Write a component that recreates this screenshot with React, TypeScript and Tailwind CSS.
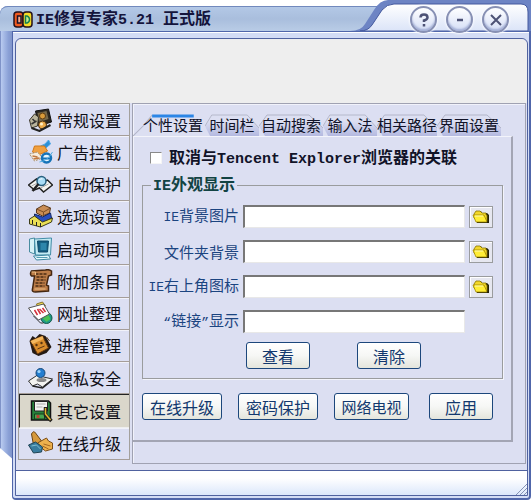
import { useState, type ReactNode } from "react";

const LATIN = "font-['Liberation_Mono',monospace]";

const icons: Record<string, ReactNode> = {
  general: (
    <>
      <path d="M7 3 L20 1 L23 14 L10 18 Z" fill="#2b2720" stroke="#111" />
      <path d="M9 5 L18 3 L20 11 L11 14 Z" fill="#77694a" />
      <path d="M1 12 L6 6 L10 9 L9 18 L3 20 Z" fill="#b9b49c" stroke="#3a352a" />
      <path d="M4 11 L7 14 M3 16 L8 13" stroke="#333" strokeWidth="1.5" />
      <circle cx="14" cy="8" r="3" fill="#d99b3a" stroke="#5c3a10" />
      <circle cx="14" cy="17" r="4" fill="#e9a94a" stroke="#4d3211" />
      <circle cx="13" cy="16" r="1.5" fill="#fff0c8" />
      <path d="M3 20 L11 23 L22 17" stroke="#222" strokeWidth="2" fill="none" />
    </>
  ),
  ads: (
    <>
      <path d="M12 6 Q17 5 20 0 L22 4 L15 10 Z" fill="#2c91d8" stroke="#4ba6e6" />
      <path d="M6 6 L16 6 L19 11 L10 15 L4 12 Z" fill="#f0a040" stroke="#d07818" />
      <path d="M1 14 L9 12 L14 18 L6 21 Z" fill="#f6ecdc" stroke="#a99375" strokeDasharray="2 1" />
      <path d="M4 16 L9 17 M5 19 L11 18" stroke="#c07840" strokeWidth="1.5" />
      <circle cx="18" cy="18" r="4.5" fill="#e8f6ff" stroke="#1673b8" strokeWidth="2.5" />
      <path d="M14 18.5 H22" stroke="#1673b8" strokeWidth="2" />
      <path d="M11 22 Q19 21 24 12" stroke="#55aee2" fill="none" />
    </>
  ),
  protect: (
    <>
      <path d="M0 13 L8 7 L13 10 L19 8 L24 13 L15 20 L11 16 L6 18 Z" fill="#f5f5f2" stroke="#222" strokeWidth="1.5" />
      <path d="M12 16 L20 12 M9 11 L3 14" stroke="#aaa" />
      <circle cx="13" cy="9" r="4.5" fill="#a9dcf5" stroke="#28607f" strokeWidth="1.5" />
      <path d="M11 8 Q12 6 14 7" stroke="#fff" fill="none" />
      <path d="M10 12 L4 19" stroke="#222" strokeWidth="2.5" />
    </>
  ),
  options: (
    <>
      <path d="M8 5 L15 1 L22 4 L21 9 L14 12 L8 9 Z" fill="#c98d55" stroke="#59391d" />
      <path d="M8 5 L15 8 L22 4 M15 8 V12" stroke="#7b4e27" fill="none" />
      <path d="M6 10 L14 13 L22 9 L23 14 L14 19 L6 15 Z" fill="#284fc0" stroke="#142764" />
      <path d="M1 15 L6 12 L14 18 L24 14 L23 18 L12 23 L1 20 Z" fill="#eadf55" stroke="#3d3c18" />
      <path d="M4 16 V20 M8 18 V22 M12 19 V23" stroke="#222" />
    </>
  ),
  startup: (
    <>
      <path d="M1 2 L6 1 L6 17 L1 15 Z" fill="#d8f2f8" stroke="#498ca0" />
      <path d="M6 2 L23 1 L22 18 L7 18 Z" fill="#c3ebf4" stroke="#438da7" />
      <path d="M9 4 L20 4 L19 15 L10 15 Z" fill="#166184" stroke="#0e4868" />
      <path d="M12 6 H18 V13 H12 Z" fill="#2e86ab" />
      <path d="M5 19 L20 18 L22 22 L8 23 Z" fill="#e6fbff" stroke="#3d86a0" />
      <path d="M8 20.5 H19" stroke="#559eb2" />
    </>
  ),
  extra: (
    <>
      <path d="M3 2 Q1 5 3 7 L6 7 L4 20 Q3 23 7 23 L20 22 L20 17 L18 16 L20 7 L23 6 V2 Q20 0 17 1 Z" fill="#bb7c47" stroke="#442711" strokeWidth="1.5" />
      <path d="M7 5 H19 M8 8 H17 M8 11 H17 M7 14 H16 M7 17 H16" stroke="#4c2c15" strokeDasharray="3 1" strokeWidth="1.5" />
      <path d="M3 3 H7 V6 M6 20 H17" stroke="#efc087" fill="none" />
    </>
  ),
  sites: (
    <>
      <circle cx="18" cy="17" r="5.5" fill="#1d9a86" stroke="#145648" />
      <path d="M14 17 L20 14 L22 18 L18 21 Z" fill="#4abf55" />
      <path d="M8 3 L14 1 L17 5 L10 8 Z" fill="#f2db53" stroke="#897329" />
      <path d="M0 7 L15 3 L21 13 L10 19 L5 14 Z" fill="#fff" stroke="#555" />
      <path d="M6 9 L9 14 M9 8 L12 13 M11 8 L15 12 M14 7 L17 11" stroke="#d12f3a" strokeWidth="1.5" />
      <path d="M5 15 L12 22 L15 22" stroke="#333" fill="none" />
    </>
  ),
  process: (
    <>
      <path d="M1 8 L4 3 L7 5 L11 1 L17 3 L23 14 L18 20 L10 23 L4 20 Z" fill="#241a14" />
      <path d="M2 8 L14 3 L20 15 L9 21 Z" fill="#d98c2c" stroke="#69390f" />
      <path d="M2 8 L14 3 L15 6 L4 11 Z" fill="#f4b85e" />
      <circle cx="8" cy="12" r="1.2" fill="#58340f" />
      <circle cx="13" cy="10" r="1.2" fill="#58340f" />
      <path d="M9 16 L16 13 M18 4 L21 8" stroke="#5a3312" />
    </>
  ),
  privacy: (
    <>
      <path d="M0 15 L9 9 L15 11 L24 13 L14 21 L9 18 L4 20 Z" fill="#f4f4f1" stroke="#333" />
      <path d="M4 20 L14 22 L24 14" stroke="#222" strokeWidth="1.5" fill="none" />
      <ellipse cx="13" cy="14" rx="5" ry="2" fill="#888" />
      <circle cx="12" cy="7" r="4.5" fill="#247ed0" stroke="#174777" />
      <circle cx="10.5" cy="5.5" r="1.6" fill="#9cd4fa" />
    </>
  ),
  other: (
    <>
      <path d="M3 2 H20 L22 4 V21 H3 Z" fill="#26823b" stroke="#111" strokeWidth="1.5" />
      <path d="M6 2.5 H19 V12 H6 Z" fill="#f3f3f1" stroke="#222" />
      <path d="M8 5 H17 M8 8 H14" stroke="#aaa" />
      <path d="M6 15 H16 V20 H6 Z" fill="#48a64f" stroke="#173d1c" />
      <rect x="8" y="16" width="3" height="3" fill="#bc3e32" />
      <path d="M17 8 V16 L23 22" stroke="#222" strokeWidth="3.5" fill="none" />
      <path d="M17 9 V15 L22 21" stroke="#e3b62e" strokeWidth="1.5" fill="none" />
    </>
  ),
  update: (
    <>
      <path d="M3 3 Q5 -1 7 2 L13 10 L11 17 L5 14 Z" fill="#d6993c" stroke="#684312" />
      <path d="M9 12 L18 7 L20 10 L24 12 L24 18 L17 20 L13 17 Z" fill="#edb14d" stroke="#7b4e19" />
      <path d="M0 14 L7 11 L14 16 L13 21 L5 22 Z" fill="#397c9e" stroke="#204454" />
      <path d="M3 15 L8 14 L12 18" stroke="#80bed0" fill="none" />
      <path d="M15 13 L22 15 M14 15 L20 18" stroke="#a76820" />
    </>
  ),
};

const navItems: [string, string][] = [
  ["general", "常规设置"],
  ["ads", "广告拦截"],
  ["protect", "自动保护"],
  ["options", "选项设置"],
  ["startup", "启动项目"],
  ["extra", "附加条目"],
  ["sites", "网址整理"],
  ["process", "进程管理"],
  ["privacy", "隐私安全"],
  ["other", "其它设置"],
  ["update", "在线升级"],
];

const tabs: [string, string][] = [
  ["个性设置", "w-[72px] pl-2"],
  ["时间栏", "w-[54px]"],
  ["自动搜索", "w-16"],
  ["输入法", "w-[54px]"],
  ["相关路径", "w-[60px]"],
  ["界面设置", "w-16"],
];

const fields: { id: string; latin?: string; label: string; browse: boolean }[] = [
  { id: "ie-background", latin: "IE", label: "背景图片", browse: true },
  { id: "folder-background", label: "文件夹背景", browse: true },
  { id: "ie-corner", latin: "IE", label: "右上角图标", browse: true },
  { id: "links", label: "链接显示", browse: false },
];

function AppLogo() {
  return (
    <svg viewBox="0 0 20 17" className="h-[17px] w-5 shrink-0" aria-hidden="true">
      <rect x="1" y="1" width="9" height="15" rx="3" fill="#f05a20" stroke="#24121c" strokeWidth="1.5" />
      <rect x="10" y="1" width="9" height="15" rx="3" fill="#f5d928" stroke="#24121c" strokeWidth="1.5" />
      <rect x="4.5" y="5" width="3.5" height="7" fill="#f9a98b" stroke="#1b1328" strokeWidth="1.5" />
      <path d="M12.5 5 H14 Q16.500 6 16.500 8.500 T14 12 H12.500 Z" fill="#c9ed8e" stroke="#138052" strokeWidth="1.5" />
    </svg>
  );
}

function CapButton({ name, children }: { name: string; children: ReactNode }) {
  return (
    <button
      type="button"
      aria-label={name}
      className="flex size-[27px] items-center justify-center rounded-full border-2 border-[#8790b4] bg-linear-to-b from-white to-[#d5def6] shadow-[0_0_2px_1px_#f8faff,inset_0_-2px_2px_#a3afd6]"
    >
      <svg viewBox="0 0 16 16" className="size-4" fill="none" stroke="#4d5275" strokeWidth="2.5" aria-hidden="true">
        {children}
      </svg>
    </button>
  );
}

function FolderIcon() {
  return (
    <svg viewBox="0 0 18 14" className="h-3.5 w-[18px]" aria-hidden="true">
      <path d="M3 4 L5 1 H9 L10 3 H15 L17 5 V13 H5 Z" fill="#222008" />
      <path d="M2 4 L4 1 H8 L10 3 H14 V5 H15 V11 H5 L2 8 Z" fill="#f3d72a" stroke="#877400" strokeWidth="0.8" />
      <path d="M1 5 H12 L15 12 H4 Z" fill="#ffed36" stroke="#9f8600" strokeWidth="0.8" />
      <path d="M3 6 H11" stroke="#fffab0" />
    </svg>
  );
}

function PushButton({ size, children }: { size: string; children: ReactNode }) {
  return (
    <button
      type="button"
      className={`h-[27px] shrink-0 rounded-[3px] border border-[#1c477c] bg-linear-to-b from-white via-[#f6f7f5] to-[#e4e5dc] leading-6 whitespace-nowrap text-[#12386e] ${size}`}
    >
      {children}
    </button>
  );
}

function Tab({ label, width, active, onClick }: { label: string; width: string; active: boolean; onClick: () => void }) {
  return (
    <button
      type="button"
      role="tab"
      aria-selected={active}
      onClick={onClick}
      className={`relative isolate flex h-[22px] shrink-0 items-center justify-center text-[15px] leading-5 whitespace-nowrap text-[#111328] ${width}`}
    >
      <svg viewBox="0 0 64 22" preserveAspectRatio="none" className="absolute inset-0 -z-10 size-full" aria-hidden="true">
        <defs>
          <linearGradient id={`tab-${label}`} x1="0" y1="0" x2="0" y2="1">
            <stop offset="0.3" stopColor="#dcdff2" />
            <stop offset="1" stopColor={active ? "#dcdff2" : "#b4b9e0"} />
          </linearGradient>
        </defs>
        <path
          d={active ? "M0 22 L9 12 L17 1 H53 L64 22" : "M0 12 L8 1 H50 L64 14 V22 H6 Z"}
          fill={`url(#tab-${label})`}
        />
        <path d={active ? "M0 22 L9 12 L17 1" : "M0 12 L8 1 H50 L64 14"} fill="none" stroke="#b2b5c8" />
        {active && <path d="M17 2 H54" stroke="#2c86e6" strokeWidth="3" />}
      </svg>
      {label}
    </button>
  );
}

export default function App() {
  const [page, setPage] = useState("other");
  const [tab, setTab] = useState("个性设置");

  return (
    <div className="relative isolate flex min-h-screen flex-col bg-white font-['Noto_Sans_CJK_SC',sans-serif] text-base">
      <div className="absolute top-1.5 bottom-[38px] left-0 -z-10 w-4 rounded-tl-lg border-l border-[#7f93c8] bg-linear-to-r from-[#b9cbf0] via-[#8aa0d6] to-[#7688bd] [clip-path:polygon(0_0,100%_0,100%_100%,0_calc(100%-14px))]" />

      <header className="flex h-[31px] shrink-0 items-end">
        <h1 className="flex h-[25px] min-w-0 flex-1 items-center rounded-tl-lg border-t border-[#7189bd] bg-linear-to-b from-[#b3c8e6] via-[#a9bedd] to-[#b9cce6] pl-[13px] leading-6 font-bold whitespace-pre text-[#14143c]">
          <AppLogo />
          <span className="ml-[3px]">
            <span className={`text-[15px] ${LATIN}`}>IE</span>修复专家
            <span className={`text-[15px] ${LATIN}`}>5.21 </span>正式版
          </span>
        </h1>
        <div className="relative isolate -ml-8 flex h-[31px] w-[181px] items-center justify-end gap-[9px] pt-2 pr-[22px]">
          <svg viewBox="0 0 181 31" preserveAspectRatio="none" className="absolute inset-0 -z-10 size-full" aria-hidden="true">
            <defs>
              <linearGradient id="cap" x1="0" y1="0" x2="0" y2="1">
                <stop offset="0" stopColor="#ffffff" />
                <stop offset="1" stopColor="#dbe4f8" />
              </linearGradient>
            </defs>
            <path d="M0 31 Q11 31 15 24 L24 10 Q30 0 38 0 H181 V31 Z" fill="#6d84c4" />
            <path d="M10 31 Q18 31 22 25 L32 10 Q37 4 44 4 H171 Q178 4 178 12 V31 Z" fill="url(#cap)" stroke="#44599e" />
          </svg>
          <CapButton name="帮助">
            <path d="M4.500 5.500 Q4.500 2.500 8 2.500 T11.500 5.500 Q11.500 7.500 8 8.500 V10 M8 12 V14.500" />
          </CapButton>
          <CapButton name="最小化">
            <path d="M5 8 H11" />
          </CapButton>
          <CapButton name="关闭">
            <path d="M3 3 L13 13 M13 3 L3 13" strokeWidth="2" />
          </CapButton>
        </div>
      </header>

      <div className="ml-3 flex flex-1 flex-col rounded-b-sm border-t border-r-2 border-b-2 border-l border-[#5066aa] bg-[#d3dcf5] pt-1.5 pr-px pb-0.5 pl-0.5 shadow-[inset_0_1px_#ffffff]">
        <div className="flex flex-1 flex-col rounded-t-md border border-[#50629f] bg-[#dcdff2]">
          <div className="h-16 rounded-t-md bg-[#eeeeee]" />

          <main className="flex flex-1 items-stretch gap-0.5 pr-px pl-0.5">
            <nav className="mb-2.5 flex w-28 shrink-0 flex-col border-x border-t border-[#a3a09c]">
              {navItems.map(([id, label]) => (
                <button
                  key={id}
                  type="button"
                  aria-current={page === id}
                  onClick={() => setPage(id)}
                  className={
                    page === id
                      ? "flex flex-1 items-center gap-1 border-t border-b border-l border-t-[#222222] border-b-[#eeeeee] border-l-[#222222] bg-[#dad7cb] pl-2 leading-6 text-[#101018]"
                      : "flex flex-1 items-center gap-1 border-b border-[#a59d98] pl-[9px] leading-6 text-[#101018] shadow-[inset_0_1px_#f1f2fa]"
                  }
                >
                  <svg viewBox="0 0 24 24" className="h-6 w-[25px] shrink-0" fill="none" aria-hidden="true">
                    {icons[id]}
                  </svg>
                  {label}
                </button>
              ))}
            </nav>

            <section className="mb-1.5 flex min-w-0 flex-1 flex-col border border-[#a0a2b2] pt-2.5 pr-3 pb-[21px] shadow-[inset_1px_1px_#f1f2fb]">
              <div role="tablist" className="flex">
                {tabs.map(([label, width]) => (
                  <Tab key={label} label={label} width={width} active={tab === label} onClick={() => setTab(label)} />
                ))}
              </div>

              <div
                role="tabpanel"
                aria-label={tab}
                className="flex-1 border-t border-r-2 border-b-2 border-t-[#f3f4fb] border-r-[#a3a5b4] border-b-[#a3a5b4] pt-[11px] pr-2 pl-[9px]"
              >
                <label className="flex h-5 items-center gap-[7px] pl-2 leading-5 font-bold whitespace-nowrap text-[#111328]">
                  <input
                    type="checkbox"
                    className="size-3 shrink-0 appearance-none border border-t-[#898989] border-r-[#f5f5f5] border-b-[#f5f5f5] border-l-[#898989] bg-white checked:bg-[#284fc0]"
                  />
                  <span>
                    取消与<span className={`text-[15px] ${LATIN}`}>Tencent Explorer</span>浏览器的关联
                  </span>
                </label>

                <fieldset className="mt-[5px] min-w-0 border border-[#9a9c9e] pr-[9px] pb-[9px] pl-1 shadow-[1px_1px_#f3f4fb]">
                  <legend className="ml-1 px-0.5 leading-5 font-bold text-[#124343]">
                    <span className={`text-[15px] ${LATIN}`}>IE</span>外观显示
                  </legend>
                  <div className="flex flex-col gap-3 pt-2">
                    {fields.map((field) => (
                      <div key={field.id} className="grid h-[23px] grid-cols-[92px_1fr_24px] items-center gap-1">
                        <label htmlFor={field.id} className="text-right text-[15px] leading-5 whitespace-nowrap text-[#1b4480]">
                          {field.latin && <span className={`text-[13px] ${LATIN}`}>{field.latin}</span>}
                          {field.browse ? (
                            field.label
                          ) : (
                            <>
                              <span className={`text-[13px] ${LATIN}`}>“</span>链接<span className={`text-[13px] ${LATIN}`}>”</span>显示
                            </>
                          )}
                        </label>
                        <input
                          id={field.id}
                          type="text"
                          className="h-[23px] w-full min-w-0 border-t-2 border-r border-b border-l-2 border-t-[#777777] border-r-[#e8e8e8] border-b-[#e8e8e8] border-l-[#777777] bg-white px-1 text-[15px]"
                        />
                        {field.browse && (
                          <button
                            type="button"
                            aria-label="浏览"
                            className="flex h-[22px] w-6 items-center justify-center border border-[#9a9c9e] bg-[#e6e7f0] shadow-[inset_1px_1px_#ffffff]"
                          >
                            <FolderIcon />
                          </button>
                        )}
                      </div>
                    ))}
                  </div>
                  <div className="mt-[9px] flex gap-[47px] pl-[99px]">
                    <PushButton size="w-16">查看</PushButton>
                    <PushButton size="w-16">清除</PushButton>
                  </div>
                </fieldset>

                <div className="mt-3.5 flex gap-4">
                  <PushButton size="w-20">在线升级</PushButton>
                  <PushButton size="w-20">密码保护</PushButton>
                  <PushButton size="w-[75px] text-[15px]">网络电视</PushButton>
                  <PushButton size="ml-1 w-16">应用</PushButton>
                </div>
              </div>
            </section>
          </main>

          <footer className="flex h-[25px] shrink-0 items-end justify-end border-t border-[#50629f] bg-linear-to-b from-white from-30% to-[#dce7fb]">
            <svg viewBox="0 0 12 12" className="size-3" stroke="#8592b5" fill="none" aria-hidden="true">
              <path d="M1 12 L12 1 M5 12 L12 5 M9 12 L12 9" />
            </svg>
          </footer>
        </div>
      </div>
    </div>
  );
}
